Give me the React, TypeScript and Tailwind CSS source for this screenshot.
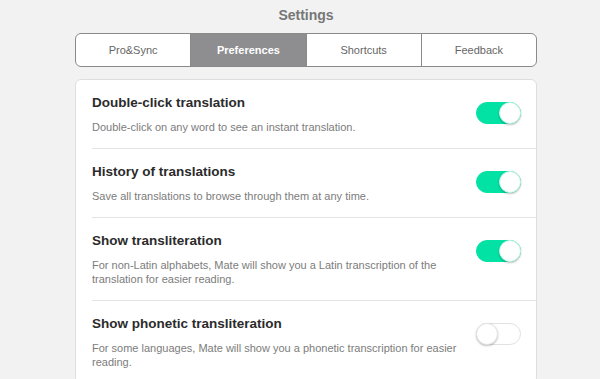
import { useState } from "react";

type Pref = { id: string; title: string; text: string; on: boolean };

const prefs: Pref[] = [
  { id: "dbl", title: "Double-click translation", text: "Double-click on any word to see an instant translation.", on: true },
  { id: "hist", title: "History of translations", text: "Save all translations to browse through them at any time.", on: true },
  {
    id: "translit",
    title: "Show transliteration",
    text: "For non-Latin alphabets, Mate will show you a Latin transcription of the translation for easier reading.",
    on: true,
  },
  {
    id: "phon",
    title: "Show phonetic transliteration",
    text: "For some languages, Mate will show you a phonetic transcription for easier reading.",
    on: false,
  },
];

const tabs = ["Pro&Sync", "Preferences", "Shortcuts", "Feedback"];

function Toggle({ on, onClick }: { on: boolean; onClick: () => void }) {
  return (
    <button
      onClick={onClick}
      className={
        "relative mt-2 h-[22px] w-[45px] shrink-0 rounded-full border " +
        (on ? "border-[#02e2a5] bg-[#02e2a5]" : "border-[#e2e2e2] bg-white")
      }
    >
      <span
        className={
          "absolute top-[-1px] h-[22px] w-[22px] rounded-full border bg-white shadow-[0_1px_2px_rgba(0,0,0,0.25)] " +
          (on ? "right-[-1px] border-[#bff5e4]" : "left-[-1px] border-[#e4e4e4]")
        }
      />
    </button>
  );
}

export default function App() {
  const [active] = useState("Preferences");
  const [rows, setRows] = useState(prefs);
  const flip = (id: string) => setRows((r) => r.map((p) => (p.id === id ? { ...p, on: !p.on } : p)));

  return (
    <div className="h-[379px] overflow-hidden bg-[#f2f2f2] pl-[75px] font-['Liberation_Sans',Arial,sans-serif]">
      <div className="w-[462px]">
        <h1 className="pt-[5px] text-center text-[14px] font-bold leading-5 text-[#777]">Settings</h1>
        <div className="mt-[8px] flex h-[34px] overflow-hidden rounded-[6px] border border-[#8a8a8a] bg-white">
          {tabs.map((t, i) => (
            <div
              key={t}
              className={
                "flex flex-1 items-center justify-center text-[11px] " +
                (i > 0 ? "border-l border-[#8a8a8a] " : "") +
                (t === active ? "bg-[#8e8e91] font-bold text-white" : "text-[#666]")
              }
            >
              {t}
            </div>
          ))}
        </div>
        <div className="mt-[12px] rounded-[6px] border border-[#dedede] bg-white">
          {rows.map((p, i) => (
            <div key={p.id} className={"ml-4 flex items-start pr-[15px] pt-[14px] pb-[14px] " + (i < rows.length - 1 ? "border-b border-[#e4e4e4]" : "")}>
              <div className="flex-1 pr-[12px]">
                <div className="text-[13.5px] font-bold leading-[18px] text-[#2b2b2b]">{p.title}</div>
                <div className="mt-[8px] text-[11px] leading-[14px] text-[#7c7c7c]">{p.text}</div>
              </div>
              <Toggle on={p.on} onClick={() => flip(p.id)} />
            </div>
          ))}
        </div>
      </div>
    </div>
  );
}
